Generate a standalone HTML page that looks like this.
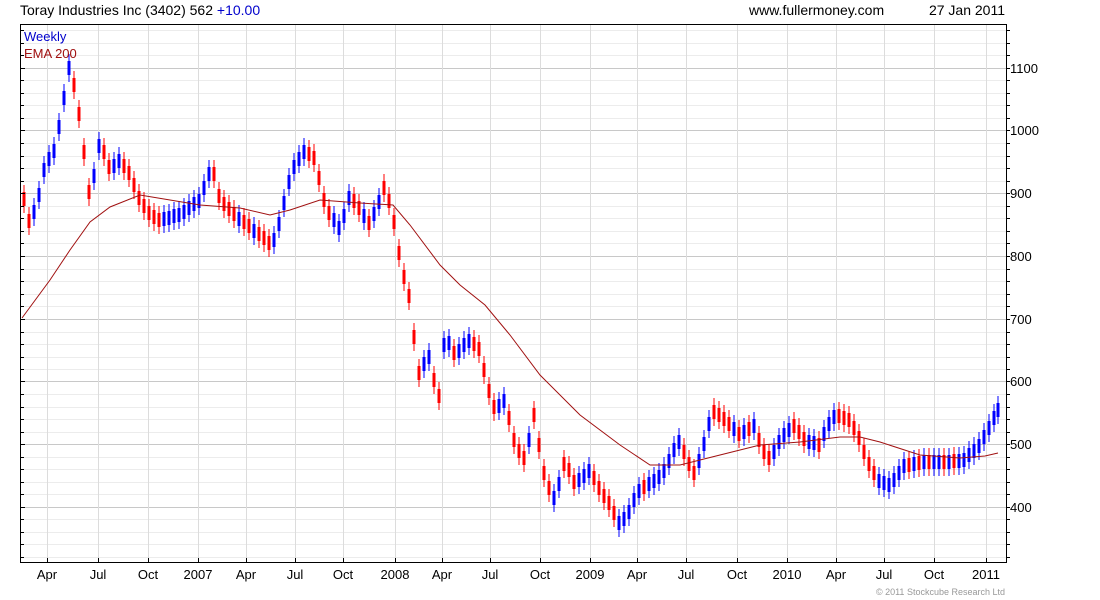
<!DOCTYPE html>
<html><head><meta charset="utf-8"><style>
html,body{margin:0;padding:0;background:#fff;width:1100px;height:600px;overflow:hidden}
svg{display:block}
text{font-family:"Liberation Sans",sans-serif}
</style></head><body>
<svg id="s" width="1100" height="600" xmlns="http://www.w3.org/2000/svg">
<defs>
<path id="rp" d="M24 192v14M29 214v14M74 78v14M79 107v14M84 145v14M89 185v14M104 145v14M109 160v14M124 159v14M129 166v14M134 178v14M139 191v14M144 199v14M149 206v14M154 210v14M159 213v14M214 167v14M219 189v14M224 197v14M229 202v14M234 207v14M244 215v14M249 219v14M259 227v14M264 231v14M269 236v14M309 147v14M314 151v14M319 171v14M324 193v14M329 206v14M354 194v14M359 201v14M369 216v14M384 181v14M389 194v14M394 215v14M399 246v14M404 270v14M409 289v14M414 330v14M419 366v14M434 373v14M439 389v14M454 346v14M474 337v14M479 342v14M484 363v14M489 384v14M494 400v14M509 411v14M514 433v14M519 444v14M524 451v14M534 408v14M539 438v14M544 466v14M549 481v14M564 457v14M569 463v14M574 475v14M594 471v14M599 481v14M604 489v14M609 496v14M614 506v14M644 480v14M684 445v14M689 457v14M694 466v14M714 405v14M719 408v14M724 412v14M729 417v14M739 427v14M749 422v14M759 433v14M764 445v14M769 451v14M794 419v14M799 425v14M804 432v14M819 438v14M839 409v14M844 411v14M849 413v14M854 421v14M859 431v14M864 445v14M869 457v14M874 466v14M909 458v14M919 456v14M929 455v14M944 455v14M954 454v14"/>
<path id="bp" d="M34 205v14M39 188v14M44 163v14M49 152v14M54 144v14M59 120v14M64 91v14M69 61v14M94 169v14M99 139v14M114 159v14M119 154v14M164 212v14M169 211v14M174 209v14M179 208v14M184 205v14M189 201v14M194 197v14M199 194v14M204 181v14M209 167v14M239 212v14M254 224v14M274 233v14M279 217v14M284 196v14M289 175v14M294 160v14M299 152v14M304 145v14M334 213v14M339 221v14M344 209v14M349 191v14M364 209v14M374 207v14M379 195v14M424 357v14M429 350v14M444 338v14M449 336v14M459 344v14M464 338v14M469 334v14M499 399v14M504 394v14M529 433v14M554 491v14M559 477v14M579 473v14M584 469v14M589 464v14M619 516v14M624 512v14M629 505v14M634 493v14M639 484v14M649 477v14M654 474v14M659 470v14M664 464v14M669 454v14M674 443v14M679 435v14M699 454v14M704 437v14M709 417v14M734 422v14M744 425v14M754 419v14M774 445v14M779 435v14M784 428v14M789 423v14M809 435v14M814 436v14M824 427v14M829 417v14M834 410v14M879 474v14M884 476v14M889 478v14M894 473v14M899 466v14M904 459v14M914 457v14M924 455v14M934 455v14M939 455v14M949 455v14M959 454v14M964 453v14M969 448v14M974 444v14M979 439v14M984 430v14M989 421v14M994 411v14M998 403v14"/>
</defs>
<path fill="none" stroke="#ececec" d="M21 532.5H1006M21 519.5H1006M21 494.5H1006M21 482.5H1006M21 469.5H1006M21 457.5H1006M21 432.5H1006M21 419.5H1006M21 407.5H1006M21 394.5H1006M21 369.5H1006M21 357.5H1006M21 344.5H1006M21 332.5H1006M21 306.5H1006M21 294.5H1006M21 281.5H1006M21 269.5H1006M21 243.5H1006M21 231.5H1006M21 218.5H1006M21 206.5H1006M21 181.5H1006M21 168.5H1006M21 156.5H1006M21 143.5H1006M21 118.5H1006M21 105.5H1006M21 93.5H1006M21 80.5H1006M21 55.5H1006M21 43.5H1006M21 30.5H1006M21 544.5H1006M21 557.5H1006"/>
<path fill="none" stroke="#c8c8c8" d="M21 507.5H1006M21 444.5H1006M21 381.5H1006M21 319.5H1006M21 256.5H1006M21 193.5H1006M21 130.5H1006M21 68.5H1006"/>
<path fill="none" stroke="#dcdcdc" d="M47.5 25V562M98.5 25V562M148.5 25V562M198.5 25V562M246.5 25V562M295.5 25V562M343.5 25V562M395.5 25V562M442.5 25V562M490.5 25V562M540.5 25V562M590.5 25V562M637.5 25V562M686.5 25V562M737.5 25V562M787.5 25V562M836.5 25V562M884.5 25V562M934.5 25V562M986.5 25V562"/>
<use href="#rp" stroke="#ff0000" stroke-width="3" fill="none"/>
<use href="#rp" stroke="#ff0000" stroke-width="1" fill="none" transform="translate(0,-7)"/>
<use href="#rp" stroke="#ff0000" stroke-width="1" fill="none" transform="translate(0,7)"/>
<use href="#bp" stroke="#0000ff" stroke-width="3" fill="none"/>
<use href="#bp" stroke="#0000ff" stroke-width="1" fill="none" transform="translate(0,-7)"/>
<use href="#bp" stroke="#0000ff" stroke-width="1" fill="none" transform="translate(0,7)"/>
<path fill="none" stroke="#a01010" d="M22 318L50 280L70 250L90 222L110 207L140 195L170 200L200 205L240 208L270 215L290 210L320 200L360 203L393 205L410 225L440 265L460 285L485 305L510 335L540 375L580 415L620 445L650 465L680 465L720 455L760 445L800 442L840 437L860 437L880 442L920 455L960 458L985 456L998 453"/>
<rect x="20.5" y="24.5" width="986" height="538" fill="none" stroke="#000"/>
<path fill="none" stroke="#000" d="M1006 507.5h4M1006 444.5h4M1006 381.5h4M1006 319.5h4M1006 256.5h4M1006 193.5h4M1006 130.5h4M1006 68.5h4M1006 532.5h4M1006 519.5h4M1006 494.5h4M1006 482.5h4M1006 469.5h4M1006 457.5h4M1006 432.5h4M1006 419.5h4M1006 407.5h4M1006 394.5h4M1006 369.5h4M1006 357.5h4M1006 344.5h4M1006 332.5h4M1006 306.5h4M1006 294.5h4M1006 281.5h4M1006 269.5h4M1006 243.5h4M1006 231.5h4M1006 218.5h4M1006 206.5h4M1006 181.5h4M1006 168.5h4M1006 156.5h4M1006 143.5h4M1006 118.5h4M1006 105.5h4M1006 93.5h4M1006 80.5h4M1006 55.5h4M1006 43.5h4M1006 30.5h4M1006 544.5h4M1006 557.5h4M21 507.5h4M21 444.5h4M21 381.5h4M21 319.5h4M21 256.5h4M21 193.5h4M21 130.5h4M21 68.5h4M21 532.5h3M21 519.5h3M21 494.5h3M21 482.5h3M21 469.5h3M21 457.5h3M21 432.5h3M21 419.5h3M21 407.5h3M21 394.5h3M21 369.5h3M21 357.5h3M21 344.5h3M21 332.5h3M21 306.5h3M21 294.5h3M21 281.5h3M21 269.5h3M21 243.5h3M21 231.5h3M21 218.5h3M21 206.5h3M21 181.5h3M21 168.5h3M21 156.5h3M21 143.5h3M21 118.5h3M21 105.5h3M21 93.5h3M21 80.5h3M21 55.5h3M21 43.5h3M21 30.5h3M21 544.5h3M21 557.5h3M47.5 558v4M98.5 558v4M148.5 558v4M198.5 558v4M246.5 558v4M295.5 558v4M343.5 558v4M395.5 558v4M442.5 558v4M490.5 558v4M540.5 558v4M590.5 558v4M637.5 558v4M686.5 558v4M737.5 558v4M787.5 558v4M836.5 558v4M884.5 558v4M934.5 558v4M986.5 558v4"/>
<g font-size="13" fill="#000">
<text x="1010" y="512">400</text><text x="1010" y="449">500</text><text x="1010" y="386">600</text><text x="1010" y="324">700</text><text x="1010" y="261">800</text><text x="1010" y="198">900</text><text x="1010" y="135">1000</text><text x="1010" y="73">1100</text>
</g>
<g font-size="13" fill="#000" text-anchor="middle">
<text x="47" y="579">Apr</text><text x="98" y="579">Jul</text><text x="148" y="579">Oct</text><text x="198" y="579">2007</text><text x="246" y="579">Apr</text><text x="295" y="579">Jul</text><text x="343" y="579">Oct</text><text x="395" y="579">2008</text><text x="442" y="579">Apr</text><text x="490" y="579">Jul</text><text x="540" y="579">Oct</text><text x="590" y="579">2009</text><text x="637" y="579">Apr</text><text x="686" y="579">Jul</text><text x="737" y="579">Oct</text><text x="787" y="579">2010</text><text x="836" y="579">Apr</text><text x="884" y="579">Jul</text><text x="934" y="579">Oct</text><text x="986" y="579">2011</text>
</g>
<text x="20" y="15" font-size="14" fill="#000">Toray Industries Inc (3402) 562 <tspan fill="#0000cc">+10.00</tspan></text>
<text x="749" y="15" font-size="14" fill="#000">www.fullermoney.com</text>
<text x="1005" y="15" font-size="14" fill="#000" text-anchor="end">27 Jan 2011</text>
<text x="24" y="41" font-size="13" fill="#0000cc">Weekly</text>
<text x="24" y="58" font-size="13" fill="#a01010">EMA 200</text>
<text x="1005" y="595" font-size="9" fill="#999" text-anchor="end">© 2011 Stockcube Research Ltd</text>
</svg>
</body></html>
